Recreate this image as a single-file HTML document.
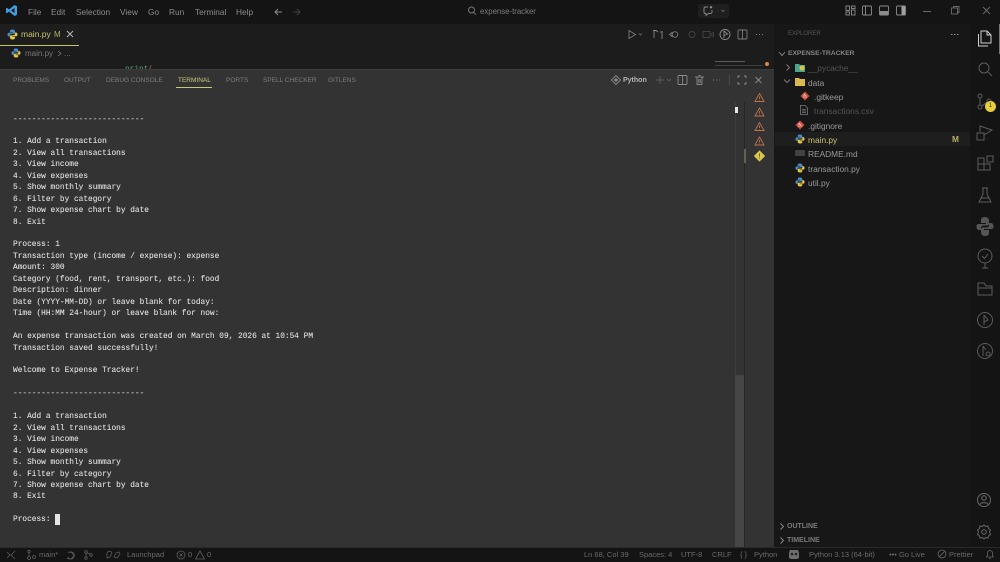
<!DOCTYPE html>
<html><head><meta charset="utf-8">
<style>
*{box-sizing:border-box}
html,body{margin:0;padding:0;background:#181818}
#root{position:absolute;left:0;top:0;width:1000px;height:562px;overflow:hidden;background:#181818;font-family:"Liberation Sans",sans-serif;filter:blur(.35px)}
.a{position:absolute;white-space:nowrap}
.m{font-size:8.3px;color:#8c8c8c;top:7px;line-height:10px}
.t{font-size:6.5px;color:#7c7c7c;top:75.500px;line-height:10px}
#term{position:absolute;left:13px;top:113.500px;font-family:"Liberation Mono",monospace;font-size:7.82px;line-height:11.457px;color:#dedede;white-space:pre;-webkit-text-stroke:.12px #dedede}
.f{font-size:8.35px;color:#9a9a9a;line-height:10px}
.s{font-size:7.5px;color:#6a6a6a;top:550px;line-height:10px}
svg{position:absolute;overflow:visible}
</style></head><body><div id="root">

<!-- title bar -->
<div class="a" style="left:0;top:0;width:1000px;height:24px;background:#141414"></div>
<svg style="left:5px;top:4px" width="13" height="13" viewBox="0 0 13 13"><path d="M9.500 1L12 2.200V10.800L9.500 12L4 7.500L1.800 9.200L1 8.700V4.300L1.800 3.800L4 5.500ZM9.500 4L6 6.500L9.500 9Z" fill="#3f9fe0"/></svg>
<div class="a m" style="left:28px">File</div>
<div class="a m" style="left:51px">Edit</div>
<div class="a m" style="left:76px">Selection</div>
<div class="a m" style="left:120px">View</div>
<div class="a m" style="left:148px">Go</div>
<div class="a m" style="left:169px">Run</div>
<div class="a m" style="left:195px">Terminal</div>
<div class="a m" style="left:236px">Help</div>
<svg style="left:274px;top:7px" width="10" height="10" fill="none" stroke="#8a8a8a" stroke-width="1"><path d="M8 5H1M4 2L1 5L4 8"/></svg>
<svg style="left:292px;top:7px" width="10" height="10" fill="none" stroke="#3f3f3f" stroke-width="1"><path d="M1 5H8M5 2L8 5L5 8"/></svg>
<svg style="left:467px;top:6px" width="10" height="10" fill="none" stroke="#7d7d7d" stroke-width=".9"><circle cx="4.500" cy="4" r="3"/><path d="M6.800 6.400L9 8.600"/></svg>
<div class="a" style="left:480px;top:6px;font-size:7.800px;line-height:11px;color:#7d7d7d">expense-tracker</div>
<div class="a" style="left:698px;top:4px;width:31px;height:14px;background:#1f1f1f;border-radius:3px"></div>
<svg style="left:702px;top:5px" width="24" height="12" fill="none" stroke="#8a8a8a" stroke-width=".9"><path d="M6 2H3.500Q2 2 2 3.500V7Q2 8.500 3.500 8.500H4V10.500L6.500 8.500H8Q10 8.500 10 7V5"/><path d="M19.500 5L21 6.500L22.500 5" stroke="#666"/><path d="M9 1V3.500M7.800 2.200H10.200" stroke="#aaa"/></svg>
<svg style="left:845px;top:5px" width="70" height="12" fill="none" stroke="#8c8c8c" stroke-width=".9">
<rect x="1" y="1" width="3.500" height="4.500"/><rect x="6.500" y="1" width="3.500" height="2.500"/><rect x="1" y="7" width="3.500" height="3"/><rect x="6.500" y="5" width="3.500" height="5"/>
<rect x="17.500" y="1" width="9" height="9" rx="1"/><path d="M20.500 1V10"/>
<rect x="34.500" y="1" width="9" height="9" rx="1"/><rect x="35" y="6" width="8" height="3.500" fill="#8c8c8c" stroke="none"/>
<rect x="51.500" y="1" width="9" height="9" rx="1"/><rect x="56.500" y="1.500" width="3.500" height="8" fill="#a0a0a0" stroke="none"/></svg>
<div class="a" style="left:923px;top:10.500px;width:8px;height:1px;background:#6c6c6c"></div>
<svg style="left:951px;top:6px" width="9" height="9" fill="none" stroke="#6c6c6c" stroke-width=".9"><rect x=".5" y="2" width="6" height="6"/><path d="M2.500 2V.5H8V6.500H6.500"/></svg>
<svg style="left:982px;top:6px" width="9" height="9" fill="none" stroke="#6c6c6c" stroke-width=".9"><path d="M1 1L8 8M8 1L1 8"/></svg>

<!-- editor -->
<div class="a" style="left:0;top:24px;width:774px;height:45px;background:#1c1c1c"></div>
<div class="a" style="left:0;top:24px;width:79px;height:22px;background:#1e1e1e;border-bottom:1px solid #c8c46a"></div>
<svg style="left:7px;top:29px" width="11" height="11" viewBox="0 0 11 11"><path d="M5.500 .5C3.500 .5 3 1.200 3 2.200V3.200H5.700V3.700H2C1 3.700 .5 4.400 .5 5.500S1 7.500 2 7.500H3V6.200C3 5.200 3.700 4.800 4.500 4.800H7C7.700 4.800 8 4.300 8 3.700V2.200C8 1.200 7 .5 5.500 .5Z" fill="#4a8dc4"/><path d="M5.500 10.500C7.500 10.500 8 9.800 8 8.800V7.800H5.300V7.300H9C10 7.300 10.500 6.600 10.500 5.500S10 3.500 9 3.500H8V4.800C8 5.800 7.300 6.200 6.500 6.200H4C3.300 6.200 3 6.700 3 7.300V8.800C3 9.800 4 10.500 5.500 10.500Z" fill="#e5c544"/></svg>
<div class="a" style="left:21px;top:29px;font-size:8.500px;line-height:11px;color:#c9c46e">main.py</div>
<div class="a" style="left:54px;top:29px;font-size:8px;line-height:11px;color:#b5b060">M</div>
<svg style="left:66px;top:30px" width="8" height="8" fill="none" stroke="#b8b8b8" stroke-width="1"><path d="M1 1L7 7M7 1L1 7"/></svg>
<svg style="left:11px;top:48px" width="10" height="10" viewBox="0 0 11 11"><path d="M5.500 .5C3.500 .5 3 1.200 3 2.200V3.200H5.700V3.700H2C1 3.700 .5 4.400 .5 5.500S1 7.500 2 7.500H3V6.200C3 5.200 3.700 4.800 4.500 4.800H7C7.700 4.800 8 4.300 8 3.700V2.200C8 1.200 7 .5 5.500 .5Z" fill="#4a8dc4"/><path d="M5.500 10.500C7.500 10.500 8 9.800 8 8.800V7.800H5.300V7.300H9C10 7.300 10.500 6.600 10.500 5.500S10 3.500 9 3.500H8V4.800C8 5.800 7.300 6.200 6.500 6.200H4C3.300 6.200 3 6.700 3 7.300V8.800C3 9.800 4 10.500 5.500 10.500Z" fill="#e5c544"/></svg>
<div class="a" style="left:25px;top:48px;font-size:8px;line-height:11px;color:#787878">main.py</div>
<svg style="left:57px;top:50px" width="5" height="7" fill="none" stroke="#787878" stroke-width=".8"><path d="M1 1L4 3.500L1 6"/></svg>
<div class="a" style="left:64px;top:48px;font-size:8px;line-height:11px;color:#787878">...</div>
<div class="a" style="left:125px;top:64.500px;font-family:'Liberation Mono',monospace;font-size:7.800px;line-height:10px;color:#5f9a7c">print<span style="color:#b05a5a">(</span></div>
<svg style="left:627px;top:28px" width="145" height="14" fill="none" stroke="#7c7c7c" stroke-width=".9">
<path d="M2 2.500V10.500L8.500 6.500Z"/><path d="M12 5.500L13.500 7L15 5.500" stroke="#666"/>
<path d="M27 3V10M26 2.500H29L31 4M35 11V5M33 4H36" stroke="#888"/>
<circle cx="48" cy="6.500" r="2.800"/><path d="M42.500 6.500L45 4.500V8.500Z"/>
<circle cx="65" cy="6.500" r="3" stroke="#444"/>
<rect x="76" y="3.500" width="7" height="6" stroke="#444"/><path d="M84 6L86.500 4.500V8.500L84 7" stroke="#444"/>
<circle cx="98" cy="6.500" r="5" stroke="#8a8a8a"/><path d="M97 3V10M97 3L100.500 6L97 7.500" stroke="#8a8a8a"/>
<rect x="111" y="2" width="9" height="9" rx="1"/><path d="M115.500 2V11"/>
<path d="M129 6.500H130M132 6.500H133M135 6.500H136"/></svg>
<div class="a" style="left:715px;top:61px;width:30px;height:1px;background:#5c5c5c"></div>
<div class="a" style="left:715px;top:65px;width:48px;height:1px;background:#3f3f3f"></div>
<div class="a" style="left:765px;top:62px;width:4px;height:4px;background:#d08a4a;border-radius:2px"></div>

<!-- panel -->
<div class="a" style="left:0;top:69px;width:774px;height:478px;background:#333334;border-top:1px solid #3c3c3c"></div>
<div class="a t" style="left:13px">PROBLEMS</div>
<div class="a t" style="left:64px">OUTPUT</div>
<div class="a t" style="left:106px">DEBUG CONSOLE</div>
<div class="a t" style="left:178px;color:#c9c87a">TERMINAL</div>
<div class="a" style="left:176px;top:87px;width:36px;height:1px;background:#c9c87a"></div>
<div class="a t" style="left:226px">PORTS</div>
<div class="a t" style="left:263px">SPELL CHECKER</div>
<div class="a t" style="left:328px">GITLENS</div>
<svg style="left:610px;top:74px" width="150" height="13" fill="none" stroke="#8a8a8a" stroke-width=".9">
<path d="M6 1.500L10.500 6L6 10.500L1.500 6Z"/><path d="M4 6H8M6 4V8" stroke="#aaa"/>
<path d="M46 6H54M50 2V10" stroke="#5c5c5c"/><path d="M57 5L59 7L61 5" stroke="#5c5c5c"/>
<rect x="68" y="1.500" width="9" height="9" rx="1"/><path d="M72.500 1.500V10.500"/>
<path d="M85 3H94M87 3V10.500H92V3M88.500 1.500H90.500M88.800 5V9M90.200 5V9"/>
<path d="M103 6H104M106 6H107M109 6H110" stroke="#777"/>
<path d="M119.500 1V11" stroke="#4c4c4c"/>
<path d="M128 4V2H130M134 2H136V4M136 8V10H134M130 10H128V8"/>
<path d="M145.500 3L151.500 9M151.500 3L145.500 9"/></svg>
<div class="a" style="left:623px;top:75px;font-size:7px;font-weight:bold;line-height:11px;color:#b4b4b4">Python</div>

<div id="term"><span style="color:#a8a8a8">----------------------------</span>

1. Add a transaction
2. View all transactions
3. View income
4. View expenses
5. Show monthly summary
6. Filter by category
7. Show expense chart by date
8. Exit

Process: 1
Transaction type (income / expense): expense
Amount: 300
Category (food, rent, transport, etc.): food
Description: dinner
Date (YYYY-MM-DD) or leave blank for today:
Time (HH:MM 24-hour) or leave blank for now:

An expense transaction was created on March 09, 2026 at 10:54 PM
Transaction saved successfully!

Welcome to Expense Tracker!

<span style="color:#a8a8a8">----------------------------</span>

1. Add a transaction
2. View all transactions
3. View income
4. View expenses
5. Show monthly summary
6. Filter by category
7. Show expense chart by date
8. Exit

Process: </div>
<div class="a" style="left:55px;top:514px;width:5px;height:11px;background:#e4e4e4"></div>

<!-- scrollbar & terminal sidebar -->
<div class="a" style="left:735px;top:102px;width:1px;height:445px;background:#3d3d3e"></div>
<div class="a" style="left:735px;top:375px;width:9px;height:172px;background:#464647"></div>
<div class="a" style="left:735px;top:107px;width:3px;height:6px;background:#e8e8e8"></div>
<div class="a" style="left:744px;top:102px;width:1px;height:445px;background:#262627"></div>
<div class="a" style="left:744px;top:149px;width:2px;height:14px;background:#5e6350"></div>
<svg style="left:754px;top:92px" width="12" height="70" fill="none" stroke="#c0714a" stroke-width=".9">
<path d="M5.500 1.500L10 9.500H1ZM5.500 4.500V7M5.500 8V8.500"/>
<path d="M5.500 16L10 24H1ZM5.500 19V21.500M5.500 22.500V23"/>
<path d="M5.500 30.500L10 38.500H1ZM5.500 33.500V36M5.500 37V37.500"/>
<path d="M5.500 45L10 53H1ZM5.500 48V50.500M5.500 51.500V52"/>
<path d="M5.500 59L10.500 64L5.500 69L.5 64Z" fill="#d9c84a" stroke="#d9c84a"/>
<path d="M5.500 61.500V64.500M5.500 65.500V66.500" stroke="#5a5220"/></svg>

<!-- explorer -->
<div class="a" style="left:774px;top:24px;width:196px;height:523px;background:#171717"></div>
<div class="a" style="left:788px;top:30px;font-size:6px;line-height:9px;color:#555">EXPLORER</div>
<div class="a" style="left:951px;top:33.500px;width:8px;height:1px;background:repeating-linear-gradient(90deg,#8a8a8a 0 1.500px,transparent 1.500px 3px)"></div>
<svg style="left:778px;top:50px" width="8" height="8" fill="none" stroke="#8c8c8c" stroke-width=".9"><path d="M1 2L4 5.500L7 2"/></svg>
<div class="a" style="left:788px;top:49px;font-size:6.700px;font-weight:bold;line-height:10px;color:#858585">EXPENSE-TRACKER</div>
<svg style="left:785px;top:63px" width="6" height="9" fill="none" stroke="#7c7c7c" stroke-width=".9"><path d="M1.500 1.500L4.500 4.500L1.500 7.500"/></svg>
<svg style="left:795px;top:63px" width="10" height="9"><path d="M0 1H4L5 2H10V9H0Z" fill="#4da58f"/><circle cx="7" cy="5" r="2.500" fill="#d9c44a"/></svg>
<div class="a f" style="left:808px;top:63px;color:#555">__pycache__</div>
<svg style="left:783px;top:78px" width="8" height="7" fill="none" stroke="#7c7c7c" stroke-width=".9"><path d="M1 1.500L4 4.500L7 1.500"/></svg>
<svg style="left:795px;top:77px" width="10" height="9"><path d="M0 1H4L5 2H10V9H0Z" fill="#d9b850"/></svg>
<div class="a f" style="left:808px;top:78px">data</div>
<svg style="left:800px;top:91px" width="10" height="10"><path d="M5 .5L9.500 5L5 9.500L.5 5Z" fill="#cf4f3e"/><path d="M4 3L6 5V7M4 3V7" stroke="#eee" stroke-width=".6" fill="none"/></svg>
<div class="a f" style="left:814px;top:92px">.gitkeep</div>
<svg style="left:800px;top:105px" width="8" height="10" fill="none" stroke="#7c7c7c" stroke-width=".8"><path d="M.5 .5H5L7.500 3V9.500H.5ZM2 4.500H6M2 6H6M2 7.500H6"/></svg>
<div class="a f" style="left:814px;top:106px;color:#545454">transactions.csv</div>
<svg style="left:795px;top:120px" width="10" height="10"><path d="M5 .5L9.500 5L5 9.500L.5 5Z" fill="#cf4f3e"/><path d="M4 3L6 5V7M4 3V7" stroke="#eee" stroke-width=".6" fill="none"/></svg>
<div class="a f" style="left:808px;top:121px">.gitignore</div>
<div class="a" style="left:775px;top:132px;width:195px;height:14px;background:#1e1e1e"></div>
<svg style="left:795px;top:134px" width="10" height="10" viewBox="0 0 11 11"><path d="M5.500 .5C3.500 .5 3 1.200 3 2.200V3.200H5.700V3.700H2C1 3.700 .5 4.400 .5 5.500S1 7.500 2 7.500H3V6.200C3 5.200 3.700 4.800 4.500 4.800H7C7.700 4.800 8 4.300 8 3.700V2.200C8 1.200 7 .5 5.500 .5Z" fill="#4a8dc4"/><path d="M5.500 10.500C7.500 10.500 8 9.800 8 8.800V7.800H5.300V7.300H9C10 7.300 10.500 6.600 10.500 5.500S10 3.500 9 3.500H8V4.800C8 5.800 7.300 6.200 6.500 6.200H4C3.300 6.200 3 6.700 3 7.300V8.800C3 9.800 4 10.500 5.500 10.500Z" fill="#e5c544"/></svg>
<div class="a f" style="left:808px;top:135px;color:#c9c46e">main.py</div>
<div class="a f" style="left:952px;top:134px;color:#b5b060;font-weight:bold">M</div>
<div class="a" style="left:795px;top:150px;width:10px;height:6px;background:#454040;border-radius:1px"></div>
<div class="a f" style="left:808px;top:149px">README.md</div>
<svg style="left:795px;top:163px" width="10" height="10" viewBox="0 0 11 11"><path d="M5.500 .5C3.500 .5 3 1.200 3 2.200V3.200H5.700V3.700H2C1 3.700 .5 4.400 .5 5.500S1 7.500 2 7.500H3V6.200C3 5.200 3.700 4.800 4.500 4.800H7C7.700 4.800 8 4.300 8 3.700V2.200C8 1.200 7 .5 5.500 .5Z" fill="#4a8dc4"/><path d="M5.500 10.500C7.500 10.500 8 9.800 8 8.800V7.800H5.300V7.300H9C10 7.300 10.500 6.600 10.500 5.500S10 3.500 9 3.500H8V4.800C8 5.800 7.300 6.200 6.500 6.200H4C3.300 6.200 3 6.700 3 7.300V8.800C3 9.800 4 10.500 5.500 10.500Z" fill="#e5c544"/></svg>
<div class="a f" style="left:808px;top:164px">transaction.py</div>
<svg style="left:795px;top:177px" width="10" height="10" viewBox="0 0 11 11"><path d="M5.500 .5C3.500 .5 3 1.200 3 2.200V3.200H5.700V3.700H2C1 3.700 .5 4.400 .5 5.500S1 7.500 2 7.500H3V6.200C3 5.200 3.700 4.800 4.500 4.800H7C7.700 4.800 8 4.300 8 3.700V2.200C8 1.200 7 .5 5.500 .5Z" fill="#4a8dc4"/><path d="M5.500 10.500C7.500 10.500 8 9.800 8 8.800V7.800H5.300V7.300H9C10 7.300 10.500 6.600 10.500 5.500S10 3.500 9 3.500H8V4.800C8 5.800 7.300 6.200 6.500 6.200H4C3.300 6.200 3 6.700 3 7.300V8.800C3 9.800 4 10.500 5.500 10.500Z" fill="#e5c544"/></svg>
<div class="a f" style="left:808px;top:178px">util.py</div>
<svg style="left:779px;top:523px" width="6" height="22" fill="none" stroke="#8c8c8c" stroke-width=".9"><path d="M1.500 .5L4.500 3.500L1.500 6.500M1.500 14.500L4.500 17.500L1.500 20.500"/></svg>
<div class="a" style="left:787px;top:522px;font-size:7px;font-weight:bold;line-height:10px;color:#7a7a7a">OUTLINE</div>
<div class="a" style="left:787px;top:536px;font-size:7px;font-weight:bold;line-height:10px;color:#7a7a7a">TIMELINE</div>

<!-- activity bar -->
<div class="a" style="left:970px;top:24px;width:30px;height:523px;background:#141414"></div>
<div class="a" style="left:999px;top:24px;width:1px;height:30px;background:#777"></div>
<svg style="left:975px;top:28px" width="20" height="340" fill="none" stroke="#5c5c5c" stroke-width="1">
<path d="M6 3H12L16 7V15H6Z M3.500 6V18H13" stroke="#d0d0d0"/><path d="M12 3V7H16" stroke="#d0d0d0"/>
<circle cx="9" cy="40" r="5"/><path d="M13 44L17 48"/>
<circle cx="5" cy="68" r="2"/><circle cx="5" cy="79" r="2"/><circle cx="14" cy="73" r="2"/><path d="M5 70V77M12 74L7 78"/>
<path d="M5 104V98L17 102L9 107M2 105H9V112H2Z"/>
<path d="M3 130H9V136H3ZM3 136V142H9V136M9 136H15V142H9ZM12 128H18V134H12Z"/>
<path d="M7 160H13M8 160V166L4 174H16L12 166V160M5.500 170H14.500"/>
<path d="M10 189C6 189 6 191 6 193V195H11V196H4C2 196 1.500 197 1.500 198.500S2 202 4 202H6V200C6 198 7 197.500 9 197.500H12C13.500 197.500 14 196.500 14 195V193C14 191 13 189 10 189ZM10 208C14 208 14 206 14 204V202H9V201H16C18 201 18.500 200 18.500 198.500S18 195 16 195H14V197C14 199 13 199.500 11 199.500H8C6.500 199.500 6 200.500 6 202V204C6 206 7 208 10 208Z" fill="#555" stroke="none"/>
<circle cx="10" cy="228" r="7"/><path d="M7 228L9.500 230.500L13 226M10 235V240M7 240H13"/>
<path d="M3 255H9L11 258H17V267H3Z M3 260H17"/>
<circle cx="10" cy="292" r="7.500"/><path d="M9 287V297M9 287L13 292L9 294"/>
<circle cx="10" cy="323" r="7.500"/><path d="M8 318V328M8 318L11 322"/><circle cx="13" cy="326" r="2"/>
</svg>
<div class="a" style="left:985px;top:101px;width:11px;height:11px;background:#e6cf3a;border-radius:50%;font-size:6px;line-height:11px;text-align:center;color:#333">1</div>
<svg style="left:975px;top:490px" width="20" height="50" fill="none" stroke="#666" stroke-width="1">
<circle cx="9" cy="10" r="6.500"/><circle cx="9" cy="8" r="2.300"/><path d="M5 14.500C6 12 12 12 13 14.500"/>
<circle cx="9" cy="42" r="2.300"/><path d="M9 35L10.500 36.500L13 36L13.500 38.500L15.500 40L14.500 42L15.500 44.500L13.500 46L13 48L10.500 47.500L9 49L7.500 47.500L5 48L4.500 46L2.500 44.500L3.500 42L2.500 40L4.500 38.500L5 36L7.500 36.500Z"/></svg>

<!-- status bar -->
<div class="a" style="left:0;top:547px;width:1000px;height:15px;background:#141414;border-top:1px solid #2a2a2a"></div>
<svg style="left:6px;top:550px" width="225" height="10" fill="none" stroke="#5c5c5c" stroke-width=".8">
<path d="M1 8L4 5L1 2M9 1L5 5L9 9"/>
<circle cx="23" cy="1.500" r="1.200"/><circle cx="23" cy="8" r="1.500"/><circle cx="28" cy="7" r="1.500"/><path d="M23 3V6.500"/>
<path d="M62 2.500A3.500 3.500 0 1 1 61 7.500M62 7.500A3.500 3.500 0 1 0 63 2.500"/>
<circle cx="80" cy="2" r="1.300"/><circle cx="80" cy="8" r="1.300"/><circle cx="85" cy="5" r="1.300"/><path d="M80 3.300V6.700M84 4L81 3"/>
<path d="M101 5A2.500 2.500 0 1 1 106 3L104 7L101 8ZM110 3L113 2L114 4L111 8L108 7Z"/>
<circle cx="175" cy="5" r="4"/><path d="M173.500 3.500L176.500 6.500M176.500 3.500L173.500 6.500"/>
<path d="M194 1L198.500 9H189.500Z"/></svg>
<div class="a s" style="left:39px">main*</div>
<div class="a s" style="left:127px">Launchpad</div>
<div class="a s" style="left:188px">0</div>
<div class="a s" style="left:207px">0</div>
<div class="a s" style="left:584px">Ln 68, Col 39</div>
<div class="a s" style="left:639px">Spaces: 4</div>
<div class="a s" style="left:681px">UTF-8</div>
<div class="a s" style="left:712px">CRLF</div>
<div class="a s" style="left:740px">{ }</div>
<div class="a s" style="left:754px">Python</div>
<svg style="left:788px;top:549px" width="12" height="11"><path d="M2 1H10L11 4V9L9 10H3L1 9V4Z" fill="#6e6e6e"/><circle cx="4" cy="5" r="1.300" fill="#222"/><circle cx="8" cy="5" r="1.300" fill="#222"/></svg>
<div class="a s" style="left:809px">Python 3.13 (64-bit)</div>
<div class="a s" style="left:889px">&#8226;&#8226;&#8226; Go Live</div>
<svg style="left:937px;top:549px" width="10" height="10" fill="none" stroke="#666" stroke-width=".8"><circle cx="5" cy="5" r="4"/><path d="M2.200 7.800L7.800 2.200"/></svg>
<div class="a s" style="left:949px">Prettier</div>
<svg style="left:985px;top:549px" width="10" height="11" fill="none" stroke="#666" stroke-width=".8"><path d="M1.500 8H8.500L7.500 6.500V4A2.500 2.500 0 0 0 2.500 4V6.500ZM4 9.500H6"/></svg>
</div></body></html>
